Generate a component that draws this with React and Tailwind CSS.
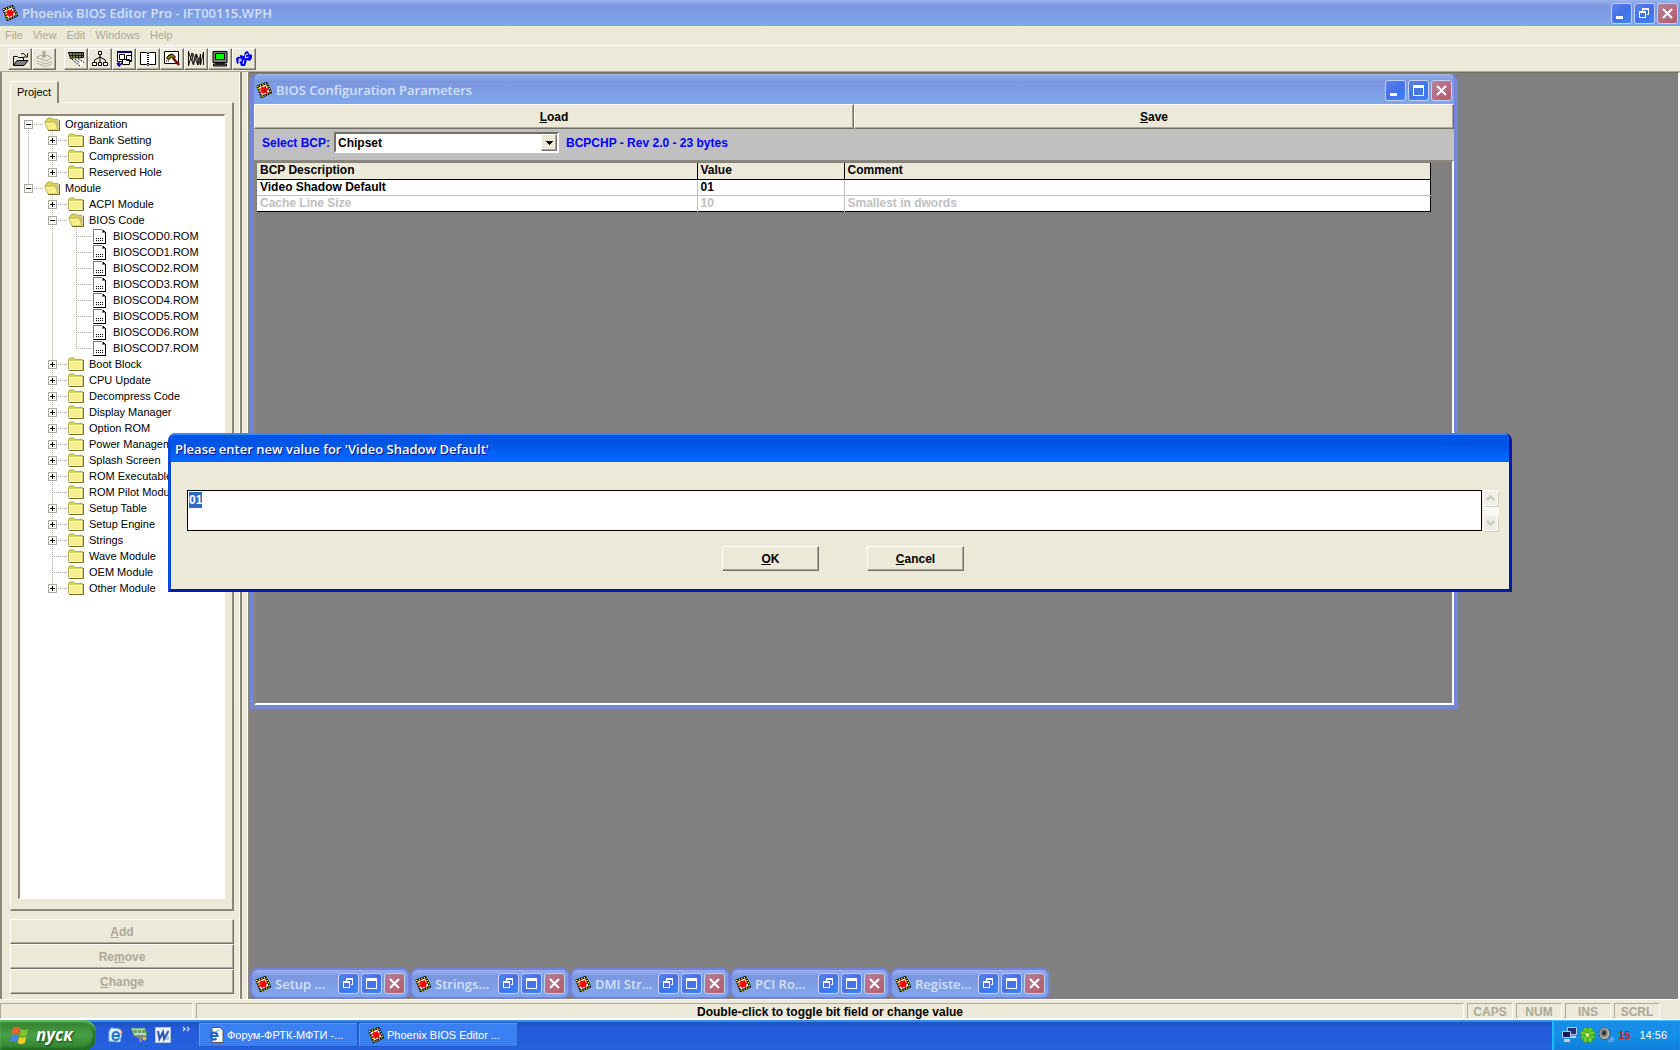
import React, { useEffect, useRef } from 'react';
import clsx from 'clsx';

const TREE = [
    {
        label: 'Organization', open: true, children: [
            { label: 'Bank Setting', closed: true },
            { label: 'Compression', closed: true },
            { label: 'Reserved Hole', closed: true },
        ],
    },
    {
        label: 'Module', open: true, children: [
            { label: 'ACPI Module', closed: true },
            {
                label: 'BIOS Code', open: true,
                children: [0, 1, 2, 3, 4, 5, 6, 7].map((n) => ({ label: `BIOSCOD${n}.ROM`, file: true })),
            },
            { label: 'Boot Block', closed: true },
            { label: 'CPU Update', closed: true },
            { label: 'Decompress Code', closed: true },
            { label: 'Display Manager', closed: true },
            { label: 'Option ROM', closed: true },
            { label: 'Power Management', closed: true },
            { label: 'Splash Screen', closed: true },
            { label: 'ROM Executable', closed: true },
            { label: 'ROM Pilot Module' },
            { label: 'Setup Table', closed: true },
            { label: 'Setup Engine', closed: true },
            { label: 'Strings', closed: true },
            { label: 'Wave Module' },
            { label: 'OEM Module' },
            { label: 'Other Module', closed: true },
        ],
    },
];

const PARAMETERS = [
    { description: 'Video Shadow Default', value: '01', comment: '' },
    { description: 'Cache Line Size', value: '10', comment: 'Smallest in dwords', disabled: true },
];

const MINIMIZED = ['Setup ...', 'Strings...', 'DMI Str...', 'PCI Ro...', 'Registe...'];

const RAISED = 'border-t border-l border-t-white border-l-white border-b border-r border-b-[#716f64] border-r-[#716f64] shadow-[inset_-1px_-1px_0_#aca899]';
const SUNKEN = 'border-t border-l border-t-[#aca899] border-l-[#aca899] border-b border-r border-b-white border-r-white';
const TITLE_FONT = "font-['Open_Sans','Noto_Sans',sans-serif]";

/* ---------- icons ---------- */

function ChipIcon() {
    return (
        <svg width="16" height="16" viewBox="0 0 16 16" className="shrink-0">
            <path d="M1.500 4.500 10.500 1 15 10.500 5.500 15Z" fill="#fff" stroke="#000" strokeWidth="2" strokeLinejoin="round" />
            <path d="M1.500 4.500 10.500 1 15 10.500 5.500 15Z" fill="none" stroke="#ffe800" strokeWidth="1.300" strokeDasharray="1.2 1.4" />
            <path d="M5 4 7.500 5.200 9.800 3.500 10.400 6 13 7 11 8.800 11.600 11.600 9 10.800 7 12.600 6.200 10.600 3.600 10.400 5 8.300 3.600 6.200 5.400 6.200Z" fill="#f00" />
            <path d="M8 8h1v1H8z" fill="#600" />
        </svg>
    );
}

function FolderIcon({ open }) {
    return (
        <svg width="16" height="14" viewBox="0 0 16 14" className="shrink-0">
            {open ? (
                <>
                    <path d="M1.500 3.500 4 1h4l1.500 1.500h4.500v10H4Z" fill="#d8d060" stroke="#b5ad4a" strokeWidth="1" />
                    <path d="M.6 5h10.600l3 8H4Z" fill="#f9f08c" stroke="#b5ad4a" strokeWidth=".8" />
                    <path d="M15.500 3v10.500H4" fill="none" stroke="#77702d" strokeWidth="1" />
                </>
            ) : (
                <>
                    <path d="M.5 12.500v-10L2 1h4l1.500 1.500h7v10Z" fill="#d8d060" stroke="#b5ad4a" strokeWidth="1" />
                    <path d="M1.500 4.500h12.500v8H1.500Z" fill="#f9f08c" stroke="#fffcc8" strokeWidth="1" />
                    <path d="M15.500 3v10.500H1" fill="none" stroke="#77702d" strokeWidth="1" />
                </>
            )}
        </svg>
    );
}

function FileIcon() {
    return (
        <svg width="14" height="15" viewBox="0 0 14 15" shapeRendering="crispEdges" className="ml-px shrink-0">
            <path d="M0 0h9l3 3v11H0z" fill="#fff" />
            <path d="M0 0h9v1H1v12H0zM9 1h1v2h2v1H9z" fill="#808080" />
            <path d="M12 3h1v12H0v-1h12zM10 1h1v1h1v1h-2z" fill="#000" />
            <path d="M3 9h1v1H3zM5 9h1v1H5zM7 9h1v1H7zM9 9h1v1H9zM3 11h1v1H3zM5 11h1v1H5zM7 11h1v1H7zM9 11h1v1H9z" fill="#000" />
        </svg>
    );
}

const TOOL_ICONS = {
    open: (
        <>
            <path d="M1.500 14V5.500h4l1 1h5v3" fill="#ece9d8" stroke="#000" />
            <path d="M1.500 14.500 5 9.500H16L12 14.500Z" fill="#808080" stroke="#000" />
            <path d="M9 3q3-2 5 2M15.500 2v4h-4" fill="none" stroke="#000" />
        </>
    ),
    layers: (
        <>
            <path d="M1 8.500l9 4 6-3M1 11.500l9 4 6-3" fill="none" stroke="#fff" />
            <path d="M.5 6.500 5 4M11 4l4.500 3-5.500 3L.5 6.500M.5 9.500l9.500 3.500 6-3M.5 12l9.500 3.500 6-3" fill="none" stroke="#aca899" />
            <path d="M8 0v4" fill="none" stroke="#aca899" strokeWidth="3" />
            <path d="M4.500 4h7L8 7.500Z" fill="#aca899" />
        </>
    ),
    board: (
        <>
            <path d="M.5 1.500h15v5l-13 1Z" fill="#808050" stroke="#000" />
            <path d="M2 4.500h13M4.500 1v6M7.500 1v6M10.500 1v6M13.500 1v6" stroke="#000" strokeWidth=".7" />
            <path d="M4 7.500h8l4 4-4 4Z" fill="#fff" />
            <path d="M4 8l8 7M7 8l5 4M10 7.500l6 4" stroke="#000" fill="none" strokeDasharray="2 1" />
        </>
    ),
    tree: (
        <>
            <path d="M6.500.5h3v3h-3zM.5 11.500h4v3h-4zM6.500 11.500h3v3h-3zM11.500 11.500h4v3h-4z" fill="#fff" stroke="#000" />
            <path d="M8 4v8M8 6 2.500 9v3M8 6l5.500 3v3" fill="none" stroke="#000" />
        </>
    ),
    windows: (
        <>
            <path d="M1.500 1.500h14v9h-14z" fill="#fff" stroke="#000" />
            <path d="M1 0h15v2H1z" fill="#000080" />
            <path d="M3.500 3.500h5v5h-5zM10.500 4.500h5v5h-5zM6.500 8.500h7v5h-7z" fill="#fff" stroke="#000" />
            <path d="M3 10v5M1 12l2 3 3-3" fill="none" stroke="#000080" strokeWidth="1.500" />
        </>
    ),
    book: (
        <>
            <path d="M.5 1.500h6l1.500 1 1.500-1h6v12h-6l-1.500 1-1.500-1h-6Z" fill="#fff" stroke="#000" />
            <path d="M8 2v12" stroke="#000" strokeDasharray="1 1" strokeWidth="2" />
        </>
    ),
    hammer: (
        <>
            <path d="M.5.5h14v12H.5z" fill="#fff" stroke="#000" />
            <path d="M2.500 7q2-4 6-4l3 3-2 2-2-2-3 3Z" fill="#808000" stroke="#000" />
            <path d="M9 7l6 7" stroke="#800000" strokeWidth="2.500" />
            <path d="M2 10h4" stroke="#000" strokeDasharray="1 1" />
        </>
    ),
    wave: <path d="M.5 0v15L4 2l1.500 12L8 3l2 11 2.500-11v11L15.500 1v13M.5 1 5.500 14M4.500 2 10 14M8.500 3l4 11" fill="none" stroke="#000" strokeWidth=".9" />,
    monitor: (
        <>
            <path d="M1 .5h14v11H1z" fill="#808080" stroke="#000" />
            <path d="M3.500 2.500h9v6h-9z" fill="#0f0" stroke="#000" />
            <path d="M4 11.500h8v1.500H4zM1.500 13h13v2h-13z" fill="#808080" stroke="#000" />
        </>
    ),
    puzzle: (
        <>
            <path d="M0 8q1-3 4-2V4l4 1 1-4 3-1 1 3 3 1v3l-2 3-3-1-1 3-1 3H5l-1-3-3 1Z" fill="#00f" />
            <path d="M3 13V8h2v2H3M12 3 9.500 4v3l3-1M8 9l-1 4" stroke="#fff" fill="none" />
        </>
    ),
};

function ToolButton({ name, label, disabled }) {
    return (
        <button type="button" aria-label={label} disabled={disabled} className={`flex h-[22px] w-6 items-center justify-center ${RAISED}`}>
            <svg width="17" height="16" viewBox="0 0 17 16">{TOOL_ICONS[name]}</svg>
        </button>
    );
}

/* ---------- window frame ---------- */

const CAPTION_GLYPHS = {
    minimize: <path d="M4 12h7v3H4z" fill="#fff" />,
    maximize: <path d="M4 4h11v11H4zM5 7v7h9V7z" fill="#fff" fillRule="evenodd" />,
    restore: (
        <>
            <path d="M7 4h7v7h-2v-1h1V6H8v1H7z" fill="#fff" />
            <path d="M4 7h7v7H4zM5 9v4h5V9z" fill="#fff" fillRule="evenodd" />
        </>
    ),
    close: <path d="M5 5l9 9M14 5l-9 9" stroke="#fff" strokeWidth="2" />,
};

function CaptionButton({ kind }) {
    return (
        <button
            type="button"
            aria-label={kind}
            className={clsx(
                'flex size-[21px] items-center justify-center rounded-[3px] border border-[#c3d0f4]',
                kind === 'close' ? 'bg-linear-to-br from-[#b5809a] to-[#b4596a]' : 'bg-linear-to-br from-[#5b80e8] via-[#4371e8] to-[#3d83f5]'
            )}
        >
            <svg width="19" height="19" viewBox="0 0 19 19">{CAPTION_GLYPHS[kind]}</svg>
        </button>
    );
}

function TitleBar({ title, buttons, className }) {
    return (
        <div className={clsx('flex items-center bg-linear-to-b from-[#9ab4f0] from-0% via-[#7b97e0] via-25% to-[#80a5ea] to-90% text-[#d5e0f8]', className)}>
            <ChipIcon />
            <span className={`ml-1 flex-1 truncate text-[13px] font-semibold leading-5 ${TITLE_FONT}`}>{title}</span>
            <div className="flex gap-0.5">
                {buttons.map((kind) => <CaptionButton key={kind} kind={kind} />)}
            </div>
        </div>
    );
}

/* ---------- project tree ---------- */

// One 24px column of the dotted guide lines
function Guide({ up, down, across }) {
    return (
        <svg width="24" height="16" viewBox="0 0 24 16" className="block">
            <g stroke="#aca899" strokeDasharray="1 1">
                {up && <path d="M8.500 0v8" />}
                {down && <path d="M8.500 8v8" />}
                {across && <path d="M8 8.500h15" />}
            </g>
        </svg>
    );
}

function ExpandBox({ open }) {
    return (
        <svg width="9" height="9" viewBox="0 0 9 9" shapeRendering="crispEdges">
            <path d="M.5.5h8v8h-8z" fill="#fff" stroke="#aca899" />
            <path d={open ? 'M2 4h5v1H2z' : 'M2 4h5v1H2zM4 2h1v5H4z'} fill="#000" />
        </svg>
    );
}

function TreeNode({ node, first, last, trail }) {
    const expandable = node.open || node.closed;
    return (
        <li role="treeitem" aria-expanded={expandable ? Boolean(node.open) : undefined}>
            <div className="flex h-4 items-center">
                {trail.map((line, i) => <Guide key={i} up={line} down={line} />)}
                <div className="relative">
                    <Guide up={!first || trail.length > 0} down={!last} across />
                    {expandable && (
                        <button type="button" aria-label={`Toggle ${node.label}`} className="absolute left-1 top-1">
                            <ExpandBox open={node.open} />
                        </button>
                    )}
                </div>
                {node.file ? <FileIcon /> : <FolderIcon open={node.open} />}
                <span className={clsx('whitespace-nowrap', node.file ? 'ml-1.5' : 'ml-[5px]')}>{node.label}</span>
            </div>
            {node.children && (
                <ul role="group">
                    {node.children.map((child, i) => (
                        <TreeNode
                            key={child.label}
                            node={child}
                            first={i === 0}
                            last={i === node.children.length - 1}
                            trail={[...trail, !last]}
                        />
                    ))}
                </ul>
            )}
        </li>
    );
}

function ProjectPanel() {
    return (
        <aside className="flex w-60 shrink-0 flex-col border-l-2 border-r border-l-[#8a877a] border-r-white pb-[5px] pl-2 pr-[5px] pt-[9px]">
            <div role="tablist" className="flex">
                <button type="button" role="tab" aria-selected="true" className="relative z-10 -mb-px h-[22px] w-[49px] rounded-t-xs border-l border-r-2 border-t border-l-white border-r-[#8a877a] border-t-white bg-[#ece9d8] text-[11px]">
                    Project
                </button>
            </div>
            <div className="flex min-h-0 flex-1 flex-col border-b-2 border-l border-r-2 border-t border-b-[#8a877a] border-l-white border-r-[#8a877a] border-t-white px-[7px] pb-2.5 pt-[11px]">
                <ul role="tree" className="min-h-0 flex-1 overflow-hidden border-b border-l-2 border-r border-t-2 border-b-white border-l-[#8a877a] border-r-white border-t-[#8a877a] bg-white text-[11px] leading-4">
                    {TREE.map((node, i) => (
                        <TreeNode key={node.label} node={node} first={i === 0} last={i === TREE.length - 1} trail={[]} />
                    ))}
                </ul>
            </div>
            <div className="mt-2 flex flex-col text-xs font-bold text-[#aca899] [text-shadow:1px_1px_0_#fff]">
                <button type="button" disabled className={`h-[25px] ${RAISED}`}><u>A</u>dd</button>
                <button type="button" disabled className={`h-[25px] ${RAISED}`}>Re<u>m</u>ove</button>
                <button type="button" disabled className={`h-[25px] ${RAISED}`}><u>C</u>hange</button>
            </div>
        </aside>
    );
}

/* ---------- MDI windows ---------- */

function ConfigWindow() {
    return (
        <section className="absolute left-0 top-px flex h-[635px] w-[1208px] flex-col overflow-hidden rounded-t-lg border-x-4 border-b-4 border-[#7486dc] bg-[#7486dc]">
            <TitleBar title="BIOS Configuration Parameters" buttons={['minimize', 'maximize', 'close']} className="h-[30px] shrink-0 px-0.5 pt-0.5" />
            <div className="flex shrink-0 bg-[#ece9d8] text-xs font-bold">
                <button type="button" className={`h-[25px] flex-1 ${RAISED}`}><u>L</u>oad</button>
                <button type="button" className={`h-[25px] flex-1 ${RAISED}`}><u>S</u>ave</button>
            </div>
            <div className="flex h-[31px] shrink-0 items-center bg-[#c0c0c0] pb-1 pl-2 text-xs font-bold text-[#0000ff]">
                <label htmlFor="bcp" className="w-[72px]">Select BCP:</label>
                <div className="relative w-[225px] border-2 border-b-white border-l-[#716f64] border-r-white border-t-[#716f64] bg-white">
                    <select id="bcp" defaultValue="Chipset" className="block h-[17px] w-full appearance-none pl-0.5 leading-4 text-black outline-none">
                        <option>Chipset</option>
                    </select>
                    <span className={`pointer-events-none absolute right-0 top-0 flex h-[17px] w-4 items-center justify-center bg-[#ece9d8] ${RAISED}`}>
                        <svg width="7" height="4" viewBox="0 0 7 4" shapeRendering="crispEdges"><path d="M0 0h7v1H6v1H5v1H4v1H3V3H2V2H1V1H0z" /></svg>
                    </span>
                </div>
                <span className="ml-[7px]">BCPCHP - Rev 2.0 - 23 bytes</span>
            </div>
            <div className="min-h-0 flex-1 border-2 border-b-white border-l-[#8a877a] border-r-white border-t-[#8a877a] bg-[#808080] pl-px pr-[21px] pt-px">
                <table className="w-full table-fixed border-collapse border-b border-r border-black bg-white text-left text-xs font-bold">
                    <colgroup>
                        <col className="w-[440px]" />
                        <col className="w-[147px]" />
                        <col />
                    </colgroup>
                    <thead>
                        <tr className="h-4 border-b border-black bg-[#ece9d8]">
                            {['BCP Description', 'Value', 'Comment'].map((head) => (
                                <th key={head} className="border-r border-black p-0 pl-[3px] leading-[15px]">{head}</th>
                            ))}
                        </tr>
                    </thead>
                    <tbody>
                        {PARAMETERS.map((row) => (
                            <tr key={row.description} className={clsx('h-4', row.disabled ? 'text-[#c0c0c0]' : 'border-b border-b-[#c0c0c0]')}>
                                <td className="border-r border-r-[#c0c0c0] p-0 pl-[3px] leading-[15px]">{row.description}</td>
                                <td className="border-r border-r-[#c0c0c0] p-0 pl-[3px] leading-[15px]">{row.value}</td>
                                <td className="p-0 pl-[3px] leading-[15px]">{row.comment}</td>
                            </tr>
                        ))}
                    </tbody>
                </table>
            </div>
        </section>
    );
}

function Workspace() {
    return (
        <main className="relative flex min-w-0 flex-1 items-end border-l-2 border-r-2 border-t border-l-[#8a877a] border-r-white border-t-[#716f64] bg-[#808080]">
            <ConfigWindow />
            {MINIMIZED.map((title) => (
                <TitleBar
                    key={title}
                    title={title}
                    buttons={['restore', 'maximize', 'close']}
                    className="h-[31px] w-40 rounded-lg border-2 border-[#7580dc] px-[3px]"
                />
            ))}
        </main>
    );
}

/* ---------- value dialog ---------- */

function ScrollButton({ label, d }) {
    return (
        <button type="button" aria-label={label} disabled className="flex h-4 w-[15px] items-center justify-center rounded-xs border border-white bg-[#eeeee6] shadow-[1px_1px_0_#d0ceba]">
            <svg width="9" height="6" viewBox="0 0 9 6"><path d={d} fill="none" stroke="#c9c7ba" strokeWidth="2" /></svg>
        </button>
    );
}

function ValueDialog() {
    const input = useRef(null);

    useEffect(() => {
        input.current.focus();
        input.current.select();
    }, []);

    return (
        <div role="dialog" aria-labelledby="dialog-title" className="absolute inset-x-[10%] top-[433px] z-20 overflow-hidden rounded-t-lg border-x-[3px] border-b-[3px] border-b-[#0019a8] border-l-[#0a48e0] border-r-[#0019a8] bg-[#ece9d8]">
            <h2 id="dialog-title" className={`h-[29px] bg-linear-to-b from-[#0053e1] from-0% via-[#0055e5] via-40% to-[#0066ff] to-85% pl-1 text-[13px] font-semibold leading-8 text-white shadow-[inset_0_2px_1px_#3a8cff] [text-shadow:1px_1px_0_#0f1089] ${TITLE_FONT}`}>
                Please enter new value for 'Video Shadow Default'
            </h2>
            <form className="pb-[18px] pl-4 pr-2.5 pt-7">
                <div className="flex gap-px">
                    <textarea
                        ref={input}
                        aria-label="New value"
                        defaultValue="01"
                        className="block h-[41px] flex-1 resize-none overflow-hidden border border-black bg-white px-px py-px text-xs font-bold leading-4 outline-none selection:bg-[#316ac5] selection:text-white"
                    />
                    <div className="flex w-4 flex-col justify-between bg-[#f8f8f4]">
                        <ScrollButton label="Scroll up" d="M1 5l3.500-3.500L8 5" />
                        <ScrollButton label="Scroll down" d="M1 1l3.500 3.500L8 1" />
                    </div>
                </div>
                <div className="mt-[15px] flex justify-center gap-12 text-xs font-bold">
                    <button type="button" className={`h-[25px] w-[97px] ${RAISED}`}><u>O</u>K</button>
                    <button type="button" className={`h-[25px] w-[97px] ${RAISED}`}><u>C</u>ancel</button>
                </div>
            </form>
        </div>
    );
}

/* ---------- bottom bars ---------- */

function StatusBar() {
    return (
        <footer className="flex h-[21px] shrink-0 gap-[3px] border-b border-t border-white pr-5 pt-[3px] text-xs font-bold leading-4">
            <div className={`w-[193px] ${SUNKEN}`} />
            <div className={`flex-1 text-center ${SUNKEN}`}>Double-click to toggle bit field or change value</div>
            {['CAPS', 'NUM', 'INS', 'SCRL'].map((key) => (
                <div key={key} className={`w-[46px] text-center text-[#aca899] ${SUNKEN}`}>{key}</div>
            ))}
        </footer>
    );
}

function BrowserIcon() {
    return (
        <svg width="16" height="16" viewBox="0 0 16 16" className="shrink-0">
            <path d="M4 .5h8l3 3v12H4Z" fill="#fffdf0" stroke="#555" />
            <path d="M2.500 9h7a3.500 3.500 0 1 0-1 2.500" fill="none" stroke="#1d63c8" strokeWidth="2.200" />
            <path d="M1 12Q0 14 3 12M8 5q4-3 3-1" stroke="#3fa0f0" fill="none" />
        </svg>
    );
}

function TaskButton({ icon, children }) {
    return (
        <button type="button" className="flex h-6 w-[159px] items-center gap-[3px] rounded-xs border border-[#5f9cf8] border-b-[#2458c8] border-r-[#2458c8] bg-[#3b80f3] pl-2 text-[11px] text-white">
            {icon}
            <span className="truncate">{children}</span>
        </button>
    );
}

function QuickLaunch() {
    return (
        <div className="ml-3 flex items-center gap-[7px]">
            <button type="button" aria-label="Outlook Express">
                <svg width="16" height="16" viewBox="0 0 16 16" className="block">
                    <path d="M3 1l9 1 2 3-2 10-11-1V5Z" fill="#e9f4ff" stroke="#7db8ee" />
                    <path d="M5 9h6q0-4-3-4T4.500 9t4 4l3-2" fill="none" stroke="#1878d0" strokeWidth="2" />
                    <path d="M11 2l4 3-4 3" fill="none" stroke="#d0602c" />
                </svg>
            </button>
            <button type="button" aria-label="Connection">
                <svg width="17" height="16" viewBox="0 0 17 16" className="block">
                    <path d="M0 1h14l2 8H3Z" fill="#b9d9b4" stroke="#4c8a55" />
                    <path d="M2 3h4v3H3zM7 3h3v3H7zM11 3h3v3h-3z" fill="#5fa56a" />
                    <path d="M5 8h7v3H6zM8 11h3v4H8z" fill="#8b8b60" />
                    <circle cx="13.500" cy="11.500" r="2" fill="#d8c43c" />
                </svg>
            </button>
            <button type="button" aria-label="Word">
                <svg width="16" height="16" viewBox="0 0 16 16" className="block">
                    <path d="M.5.5h15v15H.5z" fill="#eaf1ff" stroke="#b4c4e8" />
                    <path d="M3 4l1.500 8L8 5l1 7 4.500-8" fill="none" stroke="#2d53a8" strokeWidth="2" />
                    <path d="M10 12h4M11 10h3" stroke="#7a94cc" />
                </svg>
            </button>
            <button type="button" aria-label="More" className="mb-3 ml-1">
                <svg width="9" height="6" viewBox="0 0 9 6" className="block"><path d="M1 1l2 2-2 2M5 1l2 2-2 2" fill="none" stroke="#cfe0ff" strokeWidth="1.300" /></svg>
            </button>
        </div>
    );
}

function Taskbar() {
    return (
        <nav className="flex h-[30px] shrink-0 items-center bg-linear-to-b from-[#1c50b8] from-0% via-[#245adb] via-30% to-[#2460dc] to-90% shadow-[inset_0_2px_1px_#3f8ce8]">
            <button type="button" className="flex h-full w-24 items-center gap-1.5 rounded-r-xl bg-linear-to-b from-[#2f7a2c] via-[#4aa045] to-[#2f8030] pl-2.5 shadow-[inset_0_2px_2px_#6fbf68,inset_-3px_-2px_3px_#1f6a20]">
                <svg width="20" height="18" viewBox="0 0 20 18">
                    <path d="M3 2q4-2 7 0L8.500 8.500q-3-2-7 0Z" fill="#f0602c" />
                    <path d="M11 3q3 2 7 0L16.500 9.500q-3 2-7 0Z" fill="#7cc62c" />
                    <path d="M1.500 9.800q3-2 6.500 0L6.500 16q-3-2-6.500 0Z" fill="#4a86f0" />
                    <path d="M9.200 10.800q3 2 7 0L14.700 17q-4 2-7 0Z" fill="#f8cc28" />
                </svg>
                <span className={`text-[17px] font-bold italic leading-6 text-white [text-shadow:1px_1px_2px_#143f14] ${TITLE_FONT}`}>пуск</span>
            </button>
            <QuickLaunch />
            <div className="ml-2 flex flex-1 gap-px">
                <TaskButton icon={<BrowserIcon />}>Форум-ФРТК-МФТИ -...</TaskButton>
                <TaskButton icon={<ChipIcon />}>Phoenix BIOS Editor ...</TaskButton>
            </div>
            <div className="flex h-full items-center gap-[3px] border-l-2 border-[#20b8f8] bg-linear-to-b from-[#1b8ae8] via-[#1290e8] to-[#0f80dc] pl-2 pr-[13px] text-[11px] text-white shadow-[inset_0_1px_1px_#48c0ff]">
                <svg width="15" height="16" viewBox="0 0 15 16">
                    <path d="M5.500.5h9v7h-9z" fill="#24306c" stroke="#b9c6e8" />
                    <path d="M.5 4.500h8v6h-8z" fill="#182050" stroke="#b9c6e8" />
                    <path d="M9 9h5v2H9zM2 12h6v3H2z" fill="#c8cce8" />
                </svg>
                <svg width="15" height="16" viewBox="0 0 15 16" fill="#6fd030" stroke="#2c9010" strokeWidth=".6">
                    <ellipse cx="5.500" cy="3.500" rx="2.500" ry="3" /><ellipse cx="10" cy="3.500" rx="2.500" ry="3" />
                    <ellipse cx="3.500" cy="6" rx="3" ry="2" /><ellipse cx="12" cy="6" rx="3" ry="2" />
                    <ellipse cx="3.500" cy="10" rx="3" ry="2" /><ellipse cx="12" cy="10" rx="3" ry="2" />
                    <ellipse cx="5.500" cy="12.500" rx="2.500" ry="3" /><ellipse cx="10" cy="12.500" rx="2.500" ry="3" />
                    <circle cx="7.500" cy="8" r="2" fill="#f0f060" stroke="none" />
                </svg>
                <svg width="16" height="16" viewBox="0 0 16 16">
                    <ellipse cx="6.500" cy="6.500" rx="5.500" ry="6" fill="#b8b8b8" stroke="#505050" />
                    <ellipse cx="6" cy="6" rx="3.500" ry="4" fill="#707070" />
                    <ellipse cx="6" cy="6" rx="1.500" ry="2" fill="#202020" />
                    <path d="M10 15q3-1 4-5M13 15q2-1 3-4" fill="none" stroke="#b8c8f8" />
                </svg>
                <span className="ml-px font-bold text-[#d8141c]">15</span>
                <time className="ml-1.5">14:56</time>
            </div>
        </nav>
    );
}

export default function App() {
    return (
        <div className="relative flex h-screen w-full flex-col overflow-hidden bg-[#ece9d8] font-['Liberation_Sans',Arial,sans-serif] text-black">
            <TitleBar title="Phoenix BIOS Editor Pro - IFT00115.WPH" buttons={['minimize', 'restore', 'close']} className="h-[26px] shrink-0 px-0.5" />
            <div role="menubar" className="flex h-5 shrink-0 items-center gap-2.5 border-b border-white pl-[5px] text-[11px] text-[#aca899]">
                {['File', 'View', 'Edit', 'Windows', 'Help'].map((item) => (
                    <button key={item} type="button" role="menuitem">{item}</button>
                ))}
            </div>
            <div role="toolbar" className="flex h-[26px] shrink-0 items-center border-b border-[#aca899] pl-2">
                <ToolButton name="open" label="Open" />
                <ToolButton name="layers" label="Build" disabled />
                <div className="ml-2 flex">
                    <ToolButton name="board" label="Setup" />
                    <ToolButton name="tree" label="Modules" />
                    <ToolButton name="windows" label="Menus" />
                    <ToolButton name="book" label="Strings" />
                    <ToolButton name="hammer" label="Configuration" />
                    <ToolButton name="wave" label="Registers" />
                    <ToolButton name="monitor" label="Splash" />
                    <ToolButton name="puzzle" label="PCI" />
                </div>
            </div>
            <div className="flex min-h-0 flex-1">
                <ProjectPanel />
                <div className="w-2 shrink-0 border-l-2 border-r border-l-[#8a877a] border-r-white" />
                <Workspace />
            </div>
            <StatusBar />
            <Taskbar />
            <ValueDialog />
        </div>
    );
}
